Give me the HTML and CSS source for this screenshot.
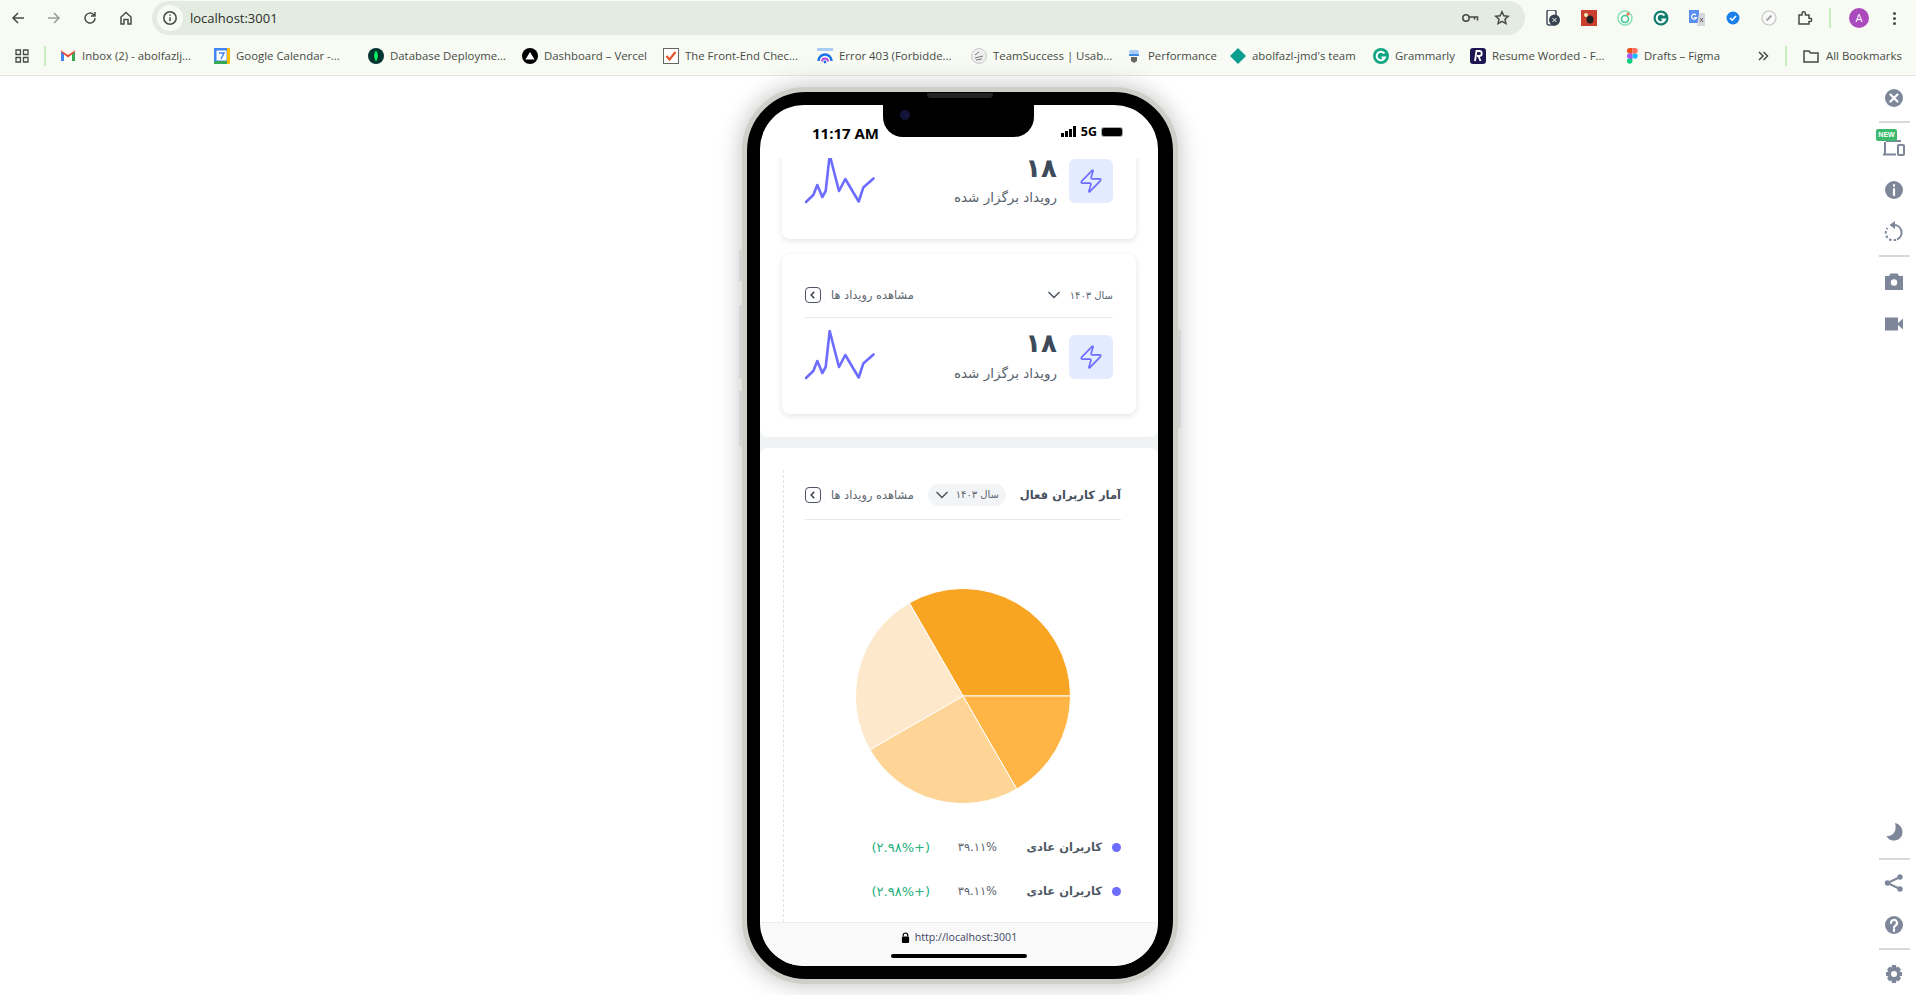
FILE: index.html
```html
<!DOCTYPE html>
<html lang="en">
<head>
    <meta charset="UTF-8">
    <title>localhost:3001</title>
    <link rel="stylesheet" href="styles.css">
</head>
<body>
    <header class="browser">
        <div class="toolbar">
            <svg class="nav-icon n-back" viewBox="0 0 16 16"><path d="M14 8H3M8 3L3 8l5 5"/></svg>
            <svg class="nav-icon n-forward" viewBox="0 0 16 16"><path d="M2 8h11M8 3l5 5-5 5"/></svg>
            <svg class="nav-icon n-reload" viewBox="0 0 16 16"><path d="M13 8a5 5 0 1 1-1.500-3.500L13 6M13 2v4H9"/></svg>
            <svg class="nav-icon n-home" viewBox="0 0 16 16"><path d="M3 14V7l5-4.500L13 7v7h-3V9.500H6V14z"/></svg>
            <div class="urlbar">
                <span class="url-badge"><svg class="nav-icon" viewBox="0 0 16 16"><circle cx="8" cy="8" r="6.200"/><path d="M8 7.200v4M8 4.500v1.300"/></svg></span>
                <span class="url-text">localhost:3001</span>
                <svg class="nav-icon n-key" viewBox="0 0 18 16"><circle cx="5" cy="8" r="3.200"/><path d="M8 7h8.500v3.500M13.500 7v2.500"/></svg>
                <svg class="nav-icon n-star" viewBox="0 0 16 16"><path d="M8 1.800l1.900 4 4.300.5-3.200 3 .9 4.300L8 11.400l-3.900 2.200.9-4.300-3.200-3 4.300-.5z"/></svg>
            </div>
            <div class="extensions">
                <svg class="ext" viewBox="0 0 16 16"><rect x="2" y="0" width="9" height="15" rx="2" fill="none" stroke="#46505e" stroke-width="1.500"/><circle cx="9.500" cy="10" r="5.500" fill="#36424f"/><path d="M7.500 8l4 4M11.500 8l-4 4" stroke="#fff"/></svg>
                <svg class="ext" viewBox="0 0 16 16"><rect width="16" height="16" fill="#c9402f"/><ellipse cx="9" cy="9.500" rx="3.500" ry="4" fill="#222"/><circle cx="5" cy="5" r="2" fill="#eeb"/></svg>
                <svg class="ext" viewBox="0 0 16 16"><circle cx="8" cy="8" r="7" fill="none" stroke="#8ce0b4" stroke-width="1.500"/><circle cx="8" cy="9" r="3.500" fill="none" stroke="#3fc79a" stroke-width="1.500"/><circle cx="11" cy="4" r="1.500" fill="#ef6a4c"/></svg>
                <svg class="ext" viewBox="0 0 16 16"><circle cx="8" cy="8" r="7.500" fill="#0f7d6d"/><path d="M11.500 5.500A4.300 4.300 0 1 0 12 9.500H8.500" fill="none" stroke="#fff" stroke-width="2"/></svg>
                <svg class="ext" viewBox="0 0 16 16"><rect width="10" height="13" fill="#5a8df0"/><path d="M10 3h6v13H8z" fill="#d5d7db"/><path d="M11 8l3 4M14 8l-3 4" stroke="#666"/><path d="M7 5a2.500 2.500 0 1 0 .5 2.500H5" fill="none" stroke="#fff" stroke-width="1.200"/></svg>
                <svg class="ext" viewBox="0 0 16 16"><circle cx="8" cy="8" r="6.500" fill="#1a7fe8"/><path d="M5 8l2.200 2.200L11 6" fill="none" stroke="#fff" stroke-width="1.600"/></svg>
                <svg class="ext" viewBox="0 0 16 16"><circle cx="8" cy="8" r="7" fill="#fafafa" stroke="#c2c5c2" stroke-width="1.200"/><path d="M5.500 10.500L10.500 5.500" stroke="#a3a6a3" stroke-width="2"/></svg>
                <svg class="nav-icon" viewBox="0 0 16 16"><path d="M2 5h3V3.500a1.700 1.700 0 0 1 3.400 0V5H12v3.200h1a1.700 1.700 0 0 1 0 3.400h-1V14H2z"/></svg>
            </div>
            <span class="bar-sep"></span>
            <span class="avatar">A</span>
            <span class="kebab"><i></i><i></i><i></i></span>
        </div>
        <div class="bookmarks">
            <svg class="nav-icon n-apps" viewBox="0 0 16 16"><path d="M2 2h4.500v4.500H2zM9.500 2H14v4.500H9.500zM2 9.500h4.500V14H2zM9.500 9.500H14V14H9.500z"/></svg>
            <span class="bar-sep"></span>
            <a class="bm w154" href="#"><svg class="fav" viewBox="0 0 16 16"><path d="M1 13V4l3 1v8z" fill="#4285f4"/><path d="M12 13V5l3-1v9z" fill="#34a853"/><path d="M1 4l7 5.500L15 4v-1.500L8 7 1 2.500z" fill="#ea4335"/></svg><span>Inbox (2) - abolfazlj...</span></a>
            <a class="bm w154" href="#"><svg class="fav" viewBox="0 0 16 16"><rect width="16" height="16" rx="1" fill="#fbbc04"/><rect x="0" y="0" width="13" height="13" fill="#4285f4"/><rect x="2.500" y="2.500" width="10" height="10" fill="#fff"/><rect y="13" width="13" height="3" fill="#34a853"/><path d="M5 5h5L7 11" fill="none" stroke="#4285f4" stroke-width="1.500"/></svg><span>Google Calendar -...</span></a>
            <a class="bm w154" href="#"><svg class="fav" viewBox="0 0 16 16"><circle cx="8" cy="8" r="8" fill="#023430"/><path d="M8 2.500c2.500 3 2.500 7 0 11-2.500-4-2.500-8 0-11z" fill="#00ed64"/></svg><span>Database Deployme...</span></a>
            <a class="bm w141" href="#"><svg class="fav" viewBox="0 0 16 16"><circle cx="8" cy="8" r="8" fill="#000"/><path d="M8 4l4.500 7.500h-9z" fill="#fff"/></svg><span>Dashboard – Vercel</span></a>
            <a class="bm w154" href="#"><svg class="fav" viewBox="0 0 16 16"><rect x=".500" y=".500" width="15" height="15" fill="#fff" stroke="#666"/><path d="M3.500 8l3 3.500 6-7.500" fill="none" stroke="#e5532d" stroke-width="2.200"/></svg><span>The Front-End Chec...</span></a>
            <a class="bm w154" href="#"><svg class="fav" viewBox="0 0 16 16"><rect y="0" width="16" height="3" fill="#a9cdf7"/><path d="M1.500 13a6.500 6.500 0 0 1 13 0" fill="none" stroke="#1a73e8" stroke-width="2.400"/><path d="M5 13.500a3 3 0 0 1 6 0" fill="none" stroke="#b44ce0" stroke-width="2"/><circle cx="8" cy="14" r="1.400" fill="#1a73e8"/></svg><span>Error 403 (Forbidde...</span></a>
            <a class="bm w155" href="#"><svg class="fav" viewBox="0 0 16 16"><circle cx="8" cy="8" r="7.500" fill="#eee" stroke="#ccc"/><path d="M4 7l4-3M4 10l8-2M5 12l6-1" stroke="#777"/></svg><span>TeamSuccess | Usab...</span></a>
            <a class="bm w104" href="#"><svg class="fav" viewBox="0 0 16 16"><rect x="3" y="2" width="10" height="4" rx="2" fill="#a9cdf7"/><rect x="3" y="6" width="10" height="2" fill="#3f8be8"/><path d="M5 9h6v4l-3 2-3-2z" fill="#666"/></svg><span>Performance</span></a>
            <a class="bm w143" href="#"><svg class="fav" viewBox="0 0 16 16"><path d="M8 0l8 8-8 8-8-8z" fill="#0b9e8f"/></svg><span>abolfazl-jmd's team</span></a>
            <a class="bm w97" href="#"><svg class="fav" viewBox="0 0 16 16"><circle cx="8" cy="8" r="8" fill="#11a683"/><path d="M11.500 5.500A4.300 4.300 0 1 0 12 9.500H8.500" fill="none" stroke="#fff" stroke-width="2"/></svg><span>Grammarly</span></a>
            <a class="bm w157" href="#"><svg class="fav" viewBox="0 0 16 16"><rect width="16" height="16" rx="3" fill="#1d1650"/><path d="M5 13l1.500-10H9a2.500 2.500 0 0 1 .5 5H7M8.500 8l2 5" fill="none" stroke="#fff" stroke-width="1.800"/></svg><span>Resume Worded - F...</span></a>
            <a class="bm w120" href="#"><svg class="fav figma" viewBox="0 0 11 16"><circle cx="8" cy="8" r="2.700" fill="#1abcfe"/><path d="M0 13a2.700 2.700 0 0 1 2.700-2.700h2.700V13a2.700 2.700 0 0 1-5.400 0z" fill="#0acf83"/><path d="M0 8a2.700 2.700 0 0 1 2.700-2.700h2.700v5.400H2.700A2.700 2.700 0 0 1 0 8z" fill="#a259ff"/><path d="M0 2.700A2.700 2.700 0 0 1 2.700 0h2.700v5.400H2.700A2.700 2.700 0 0 1 0 2.700z" fill="#f24e1e"/><path d="M5.400 0h2.700a2.700 2.700 0 0 1 0 5.400H5.400z" fill="#ff7262"/></svg><span>Drafts – Figma</span></a>
            <svg class="nav-icon n-more" viewBox="0 0 12 12"><path d="M2 2l4 4-4 4M6.500 2l4 4-4 4"/></svg>
            <span class="bar-sep"></span>
            <a class="bm bm-all" href="#"><svg class="nav-icon" viewBox="0 0 16 16"><path d="M1 3h5l1.500 2H15v9H1z"/></svg><span>All Bookmarks</span></a>
        </div>
    </header>

    <main class="stage">
        <div class="phone">
            <span class="side-btn sb1"></span>
            <span class="side-btn sb2"></span>
            <span class="side-btn sb3"></span>
            <span class="side-btn sb4"></span>
            <span class="speaker"></span>
            <div class="screen">
                <div class="notch"><span class="camera"></span></div>
                <div class="status">
                    <span class="time">11:17 AM</span>
                    <span class="status-right">
                        <span class="signal"><i></i><i></i><i></i><i></i></span>
                        <b>5G</b>
                        <span class="battery"></span>
                    </span>
                </div>

                <div class="content" dir="rtl" lang="fa">
                    <section class="panel panel-cards">
                        <article class="card card-first">
                            <div class="card-body">
                                <span class="bolt"><svg viewBox="0 0 24 24"><path d="M4 14a1 1 0 0 1-.78-1.630l9.900-10.200a.5.5 0 0 1 .86.46l-1.920 6.020A1 1 0 0 0 13 10h7a1 1 0 0 1 .78 1.630l-9.900 10.200a.5.5 0 0 1-.86-.46l1.920-6.020A1 1 0 0 0 11 14z"/></svg></span>
                                <div class="stat"><strong>۱۸</strong><span>رویداد برگزار شده</span></div>
                                <svg class="spark" viewBox="0 0 70 50"><polyline points="1,48 8.300,41 12.300,31 17.300,43 20.700,37 24.700,1 34,37 40.300,25 53.700,47.500 58.300,33.500 68.500,24.500"/></svg>
                            </div>
                        </article>
                        <article class="card">
                            <div class="card-head">
                                <span class="year">سال ۱۴۰۳ <svg class="chev" viewBox="0 0 14 8"><path d="M1.500 1l5.500 5.500L12.500 1"/></svg></span>
                                <a class="view" href="#">مشاهده رویداد ها <span class="view-box"><svg viewBox="0 0 8 8"><path d="M5 1.500L2.500 4 5 6.500"/></svg></span></a>
                            </div>
                            <div class="card-body">
                                <span class="bolt"><svg viewBox="0 0 24 24"><path d="M4 14a1 1 0 0 1-.78-1.630l9.900-10.200a.5.5 0 0 1 .86.46l-1.920 6.020A1 1 0 0 0 13 10h7a1 1 0 0 1 .78 1.630l-9.900 10.200a.5.5 0 0 1-.86-.46l1.920-6.020A1 1 0 0 0 11 14z"/></svg></span>
                                <div class="stat"><strong>۱۸</strong><span>رویداد برگزار شده</span></div>
                                <svg class="spark" viewBox="0 0 70 50"><polyline points="1,48 8.300,41 12.300,31 17.300,43 20.700,37 24.700,1 34,37 40.300,25 53.700,47.500 58.300,33.500 68.500,24.500"/></svg>
                            </div>
                        </article>
                    </section>

                    <section class="panel panel-users">
                        <div class="users">
                            <div class="users-head">
                                <h2>آمار کاربران فعال</h2>
                                <span class="year year-pill">سال ۱۴۰۳ <svg class="chev" viewBox="0 0 14 8"><path d="M1.500 1l5.500 5.500L12.500 1"/></svg></span>
                                <a class="view" href="#">مشاهده رویداد ها <span class="view-box"><svg viewBox="0 0 8 8"><path d="M5 1.500L2.500 4 5 6.500"/></svg></span></a>
                            </div>
                            <svg class="pie" viewBox="0 0 216 216">
                                <path fill="#f9a524" d="M108 108L54.250 14.900A107.500 107.500 0 0 1 215.500 108Z"/>
                                <path fill="#ffb545" d="M108 108L215.500 108A107.500 107.500 0 0 1 161.750 201.100Z"/>
                                <path fill="#fed596" d="M108 108L161.750 201.100A107.500 107.500 0 0 1 14.900 161.750Z"/>
                                <path fill="#fee8cb" d="M108 108L14.900 161.750A107.500 107.500 0 0 1 54.250 14.900Z"/>
                            </svg>
                            <ul class="legend">
                                <li><i class="dot"></i><b>کاربران عادی</b><span class="pct" dir="ltr">۳۹.۱۱%</span><span class="delta" dir="ltr">(۲.۹۸%+)</span></li>
                                <li><i class="dot"></i><b>کاربران عادی</b><span class="pct" dir="ltr">۳۹.۱۱%</span><span class="delta" dir="ltr">(۲.۹۸%+)</span></li>
                            </ul>
                        </div>
                    </section>
                </div>

                <footer class="address">
                    <div class="address-line">
                        <svg class="lock" viewBox="0 0 10 12"><path d="M2.500 5V3.500a2.500 2.500 0 0 1 5 0V5" fill="none" stroke="#000" stroke-width="1.300"/><rect x="1" y="5" width="8" height="7" rx="1"/></svg>
                        <span>http://localhost:3001</span>
                    </div>
                    <span class="home-bar"></span>
                </footer>
            </div>
        </div>

        <aside class="tools">
            <svg class="tool" viewBox="0 0 20 20"><circle cx="10" cy="10" r="9"/><path class="cut" d="M6.500 6.500l7 7M13.500 6.500l-7 7"/></svg>
            <span class="tool-sep sep-a"></span>
            <div class="tool-new">
                <span class="new-badge">NEW</span>
                <svg class="tool" viewBox="0 0 24 20"><path class="line" d="M3 4v12M1 16.500h13M4 3h15"/><rect class="line" x="16" y="7" width="6" height="10" rx="1"/></svg>
            </div>
            <svg class="tool" viewBox="0 0 20 20"><circle cx="10" cy="10" r="9"/><path class="cut" d="M10 9v6M10 5v1"/></svg>
            <svg class="tool tool-rotate" viewBox="0 0 20 20"><path class="line" d="M10 4a7.500 7.500 0 0 1 3 14.400"/><path class="line" stroke-dasharray="2.500 2" d="M12 18.800A7.500 7.500 0 0 1 3.500 7"/><path d="M11 0v8L5.500 4z"/></svg>
            <span class="tool-sep sep-b"></span>
            <svg class="tool" viewBox="0 0 20 20"><path d="M1 4h4l1.500-2.500h7L15 4h4v14H1z"/><circle class="hole" cx="10" cy="10.500" r="3.200"/></svg>
            <svg class="tool" viewBox="0 0 20 20"><path d="M1 3.500h13v13H1zM14 9l5-4.500v11L14 11z"/></svg>

            <svg class="tool tool-bottom" viewBox="0 0 20 20"><path d="M11 1c5 1 7.500 5 7.500 9a8.500 8.500 0 0 1-16 4c6 1 11-5 8.500-13z"/></svg>
            <span class="tool-sep sep-c"></span>
            <svg class="tool" viewBox="0 0 20 20"><circle cx="16" cy="4" r="2.700"/><circle cx="16" cy="16" r="2.700"/><circle cx="3.500" cy="10" r="2.700"/><path class="line" d="M16 4L3.500 10 16 16"/></svg>
            <svg class="tool" viewBox="0 0 20 20"><circle cx="10" cy="10" r="9"/><path class="cut" d="M7 8a3 3 0 1 1 4.500 2.500c-1 .6-1.500 1-1.500 2.200M10 14.500v1.500"/></svg>
            <span class="tool-sep sep-d"></span>
            <svg class="tool" viewBox="0 0 20 20"><path d="M8 1h4l.5 2.500 2-.8 2.500 2.800-1.500 2 2.500.8v3.400l-2.500.8 1.500 2-2.500 2.800-2-.8L12 19H8l-.5-2.500-2 .8L3 14.500l1.500-2L2 11.700V8.300l2.500-.8L3 5.500l2.500-2.800 2 .8z"/><circle class="hole" cx="10" cy="10" r="3"/></svg>
        </aside>
    </main>
</body>
</html>
```

FILE: styles.css
```css
*{
    padding:0;
    margin:0;
    box-sizing: border-box;
}
html,body{
    height: 995px;
    overflow: hidden;
}
body{
    background-color: #fff;
    font-family: "Open Sans", "Noto Sans", sans-serif;
    color: #474a46;
}
a{
    text-decoration: none;
    color: inherit;
}
ul{
    list-style: none;
}

/* browser chrome */
.browser{
    height: 76px;
    background-color: #f7fbf3;
    border-bottom: 1px solid #e3e6e0;
}
.toolbar{
    height: 36px;
    display: flex;
    align-items: center;
    padding-left: 10px;
}
.nav-icon{
    flex: none;
    width: 16px;
    height: 16px;
    fill: none;
    stroke: #474a46;
    stroke-width: 1.500;
}
.n-forward{
    margin-left: 20px;
    stroke: #9a9d98;
}
.n-reload{
    margin-left: 20px;
}
.n-home{
    margin-left: 20px;
}
.urlbar{
    width: 1373px;
    height: 34px;
    margin-left: 18px;
    display: flex;
    align-items: center;
    background-color: #e4ebe0;
    border-radius: 17px;
    padding-left: 5px;
    padding-right: 15px;
}
.url-badge{
    width: 26px;
    height: 26px;
    border-radius: 50%;
    background-color: #f7fbf3;
    display: flex;
    align-items: center;
    justify-content: center;
}
.url-text{
    margin-left: 7px;
    font-family: "Open Sans", sans-serif;
    font-size: 13px;
    color: #2b2e2a;
}
.n-key{
    width: 18px;
    margin-left: auto;
}
.n-star{
    margin-left: 15px;
}
.extensions{
    display: flex;
    align-items: center;
    gap: 20px;
    margin-left: 20px;
}
.ext{
    width: 16px;
    height: 16px;
    flex: none;
}
.bar-sep{
    flex: none;
    width: 2px;
    height: 20px;
    background-color: #c9ecc0;
}
.toolbar .bar-sep{
    margin-left: 16px;
}
.avatar{
    flex: none;
    width: 20px;
    height: 20px;
    margin-left: 18px;
    border-radius: 50%;
    background-color: #a94bbd;
    color: #fff;
    font-size: 11px;
    line-height: 20px;
    text-align: center;
}
.kebab{
    margin-left: 24px;
    display: flex;
    flex-direction: column;
    gap: 2px;
}
.kebab i{
    width: 3px;
    height: 3px;
    border-radius: 50%;
    background-color: #474a46;
}

.bookmarks{
    height: 39px;
    display: flex;
    align-items: center;
    padding-left: 14px;
    font-size: 11.400px;
    white-space: nowrap;
}
.n-apps{
    stroke-width: 1.300;
}
.bookmarks > .bar-sep{
    margin-left: 14px;
    margin-right: 14px;
}
.bm{
    flex: none;
    display: flex;
    align-items: center;
    gap: 6px;
    overflow: hidden;
}
.bm span{
    display: block;
}
.fav{
    flex: none;
    width: 16px;
    height: 16px;
}
.figma{
    width: 11px;
}
.w154{ width: 154px; }
.w155{ width: 155px; }
.w141{ width: 141px; }
.w104{ width: 104px; }
.w143{ width: 143px; }
.w97{ width: 97px; }
.w157{ width: 157px; }
.w120{ width: 120px; }
.n-more{
    width: 12px;
    height: 12px;
    margin-left: 10px;
}
.bookmarks .n-more + .bar-sep{
    margin-left: 16px;
    margin-right: 16px;
}
.bm-all{
    gap: 7px;
}

/* page */
.stage{
    height: 919px;
    display: flex;
    background-color: #fff;
}
.phone{
    position: relative;
    flex: none;
    width: 436px;
    height: 897px;
    margin-left: 742px;
    margin-top: 11px;
    padding: 13px 15px 12px 13px;
    background-color: #000;
    border: 5px solid #cfcec9;
    border-radius: 64px;
    box-shadow: 0 0 0 1px #e4e3df, 0 0 24px rgba(0,0,0,.26);
}
.side-btn{
    position: absolute;
    width: 3px;
    background-color: #d6d6d6;
}
.sb1{ left: -8px; top: 158px; height: 31px; }
.sb2{ left: -8px; top: 213px; height: 74px; }
.sb3{ left: -8px; top: 299px; height: 55px; }
.sb4{ right: -8px; top: 238px; height: 98px; }
.speaker{
    position: absolute;
    left: 180px;
    top: 1px;
    width: 66px;
    height: 5px;
    border-radius: 0 0 4px 4px;
    background-color: #222;
}
.screen{
    position: relative;
    width: 398px;
    height: 861px;
    display: flex;
    flex-direction: column;
    background-color: #fff;
    border-radius: 44px;
    overflow: hidden;
}
.notch{
    position: absolute;
    left: 123px;
    top: 0;
    width: 151px;
    height: 32px;
    background-color: #000;
    border-radius: 0 0 20px 20px;
}
.camera{
    position: absolute;
    left: 17px;
    top: 5px;
    width: 10px;
    height: 10px;
    border-radius: 50%;
    background-color: #14143a;
}
.status{
    flex: none;
    height: 53px;
    display: flex;
    align-items: center;
    justify-content: space-between;
    padding: 2px 36px 0 52px;
    color: #000;
}
.time{
    font-size: 15px;
    font-weight: 700;
}
.status-right{
    display: flex;
    align-items: center;
    gap: 5px;
    font-size: 12.500px;
    margin-top: -2px;
}
.signal{
    display: flex;
    align-items: flex-end;
    gap: 1px;
    height: 11px;
}
.signal i{
    width: 3px;
    background-color: #000;
}
.signal i:nth-child(1){ height: 4px; }
.signal i:nth-child(2){ height: 6px; }
.signal i:nth-child(3){ height: 8px; }
.signal i:nth-child(4){ height: 11px; }
.battery{
    width: 20px;
    height: 8px;
    background-color: #000;
    border-radius: 2px;
    box-shadow: 0 0 0 1px #aaa;
}

/* scrolled content */
.content{
    flex: 1;
    min-height: 0;
    overflow: hidden;
    background-color: #f0f3f4;
    font-family: "DejaVu Sans", sans-serif;
    color: #47505c;
}
.panel{
    background-color: #fff;
}
.panel-cards{
    padding: 0 22px 23px;
    margin-bottom: 11px;
    border-radius: 0 0 8px 8px;
}
.panel-users{
    border-radius: 8px 8px 0 0;
    padding: 22px 37px 0 45px;
    height: 474px;
}
.card{
    height: 160px;
    padding: 0 23px;
    background-color: #fff;
    border-radius: 8px;
    box-shadow: 0 2px 6px rgba(0,0,0,.11);
}
.card-first{
    height: 97px;
    margin-top: -16px;
    margin-bottom: 15px;
}
.card-head{
    height: 64px;
    padding-top: 19px;
    display: flex;
    align-items: center;
    justify-content: space-between;
    border-bottom: 1px solid #e6e8ea;
}
.year{
    display: flex;
    align-items: center;
    gap: 9px;
    font-size: 10px;
    color: #5c6570;
}
.chev{
    width: 14px;
    height: 8px;
    fill: none;
    stroke: #47505c;
    stroke-width: 1.400;
}
.view{
    display: flex;
    align-items: center;
    gap: 10px;
    font-size: 11.400px;
    color: #5c6570;
}
.view-box{
    width: 16px;
    height: 16px;
    display: flex;
    align-items: center;
    justify-content: center;
    border: 1px solid #4d5662;
    border-radius: 4px;
}
.view-box svg{
    width: 10px;
    height: 10px;
    fill: none;
    stroke: #3f4853;
    stroke-width: 1.200;
}
.card-body{
    display: flex;
    align-items: flex-start;
    padding-top: 12px;
}
.bolt{
    flex: none;
    width: 44px;
    height: 44px;
    margin-top: 5px;
    display: flex;
    align-items: center;
    justify-content: center;
    background-color: #e3ecff;
    border-radius: 6px;
}
.bolt svg{
    width: 26px;
    height: 26px;
    fill: none;
    stroke: #6c6cff;
    stroke-width: 1.500;
}
.stat{
    margin-right: 12px;
}
.stat strong{
    display: block;
    height: 23px;
    margin-top: 3px;
    line-height: 20px;
    font-size: 26px;
    color: #3d4a5a;
}
.card-first .stat strong{
    height: 22px;
    margin-top: 4px;
}
.stat span{
    display: block;
    line-height: 34px;
    font-size: 13.500px;
    color: #565f6b;
}
.spark{
    width: 70px;
    height: 50px;
    margin-right: auto;
    fill: none;
    stroke: #6c6cff;
    stroke-width: 2.600;
    stroke-linejoin: round;
    stroke-linecap: round;
}

.users{
    position: relative;
    height: 452px;
}
.users::after{
    content: "";
    position: absolute;
    top: 0;
    bottom: 0;
    left: -22px;
    border-left: 1px dashed #dfe1e3;
}
.users-head{
    height: 50px;
    display: flex;
    align-items: center;
    gap: 12px;
    border-bottom: 1px solid #e6e8ea;
}
.users-head h2{
    font-size: 11.500px;
    font-weight: 700;
    margin-left: 2px;
    color: #47505c;
}
.year-pill{
    width: 78px;
    height: 22px;
    justify-content: center;
    gap: 7px;
    background-color: #f3f4f6;
    border-radius: 11px;
}
.users-head .view{
    margin-right: auto;
}
.pie{
    display: block;
    width: 216px;
    height: 216px;
    margin: 68px auto 0;
    stroke: #fff;
    stroke-width: 1;
}
.legend{
    margin-top: 21px;
}
.legend li{
    height: 44px;
    display: grid;
    grid-template-columns: 19px 105px 67px auto;
    align-items: center;
    justify-items: start;
}
.dot{
    width: 9px;
    height: 9px;
    border-radius: 50%;
    background-color: #6c6cff;
}
.legend b{
    font-size: 11.500px;
    color: #505966;
}
.pct{
    font-size: 11.500px;
    color: #5c6570;
}
.delta{
    font-size: 13px;
    color: #22b07d;
}

/* mobile address bar */
.address{
    flex: none;
    height: 44px;
    padding-top: 6px;
    background-color: #f9f9f9;
    border-top: 1px solid #eee;
    display: flex;
    flex-direction: column;
    align-items: center;
}
.address-line{
    height: 16px;
    display: flex;
    align-items: center;
    gap: 5px;
    font-size: 10.600px;
    color: #3d4560;
}
.lock{
    width: 9px;
    height: 11px;
}
.home-bar{
    width: 136px;
    height: 4px;
    margin-top: 9px;
    background-color: #000;
    border-radius: 2px;
}

/* side tools */
.tools{
    flex: none;
    width: 44px;
    margin-left: auto;
    height: 919px;
    padding-top: 1px;
    display: flex;
    flex-direction: column;
    align-items: center;
}
.tool{
    flex: none;
    width: 20px;
    height: 20px;
    margin: 11px 0;
    fill: #7d8799;
}
.tool .cut{
    fill: none;
    stroke: #fff;
    stroke-width: 2.200;
    stroke-linecap: round;
}
.tool .line{
    fill: none;
    stroke: #7d8799;
    stroke-width: 2;
}
.tool .hole{
    fill: #fff;
}
.tool-rotate{
    margin-top: 10px;
}
.tool-sep{
    flex: none;
    width: 31px;
    height: 2px;
    background-color: #d8d9de;
}
.sep-a{ margin: 2px 0 4px; }
.sep-b{ margin: 3px 0 4px; }
.sep-c{ margin: 5px 0 2px; }
.sep-d{ margin: 2px 0 3px; }
.tool-new{
    position: relative;
    flex: none;
}
.tool-new .tool{
    width: 24px;
    display: block;
}
.new-badge{
    position: absolute;
    left: -6px;
    top: 2px;
    width: 21px;
    height: 12px;
    background-color: #3cba6e;
    border-radius: 2px;
    color: #fff;
    font-family: "Liberation Sans", sans-serif;
    font-size: 7px;
    font-weight: 700;
    line-height: 12px;
    text-align: center;
}
.tool-bottom{
    margin-top: auto;
}
```
